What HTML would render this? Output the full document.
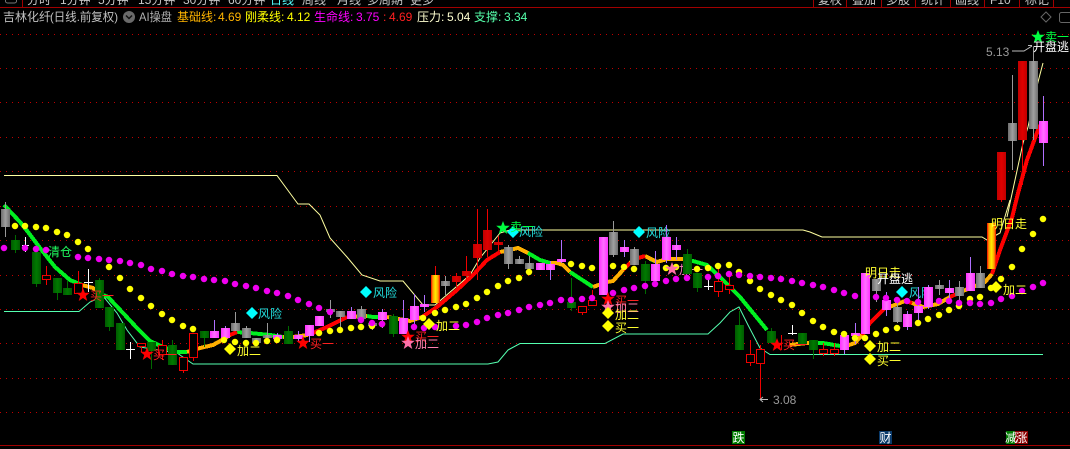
<!DOCTYPE html>
<html><head><meta charset="utf-8"><style>
html,body{margin:0;padding:0;background:#000;width:1070px;height:449px;overflow:hidden}
svg{display:block;position:absolute;left:0;top:0}
text{font-family:"Liberation Sans","WenQuanYi Zen Hei","Noto Sans CJK SC",sans-serif;font-size:12px}
.l{font-family:"WenQuanYi Zen Hei","Noto Sans CJK SC",sans-serif;font-size:12px}
.n{fill:none}
</style></head><body>
<svg width="1070" height="449" viewBox="0 0 1070 449" xmlns="http://www.w3.org/2000/svg">
<defs>
<linearGradient id="gg"><stop offset="0" stop-color="#005a00"/><stop offset=".5" stop-color="#007a00"/><stop offset="1" stop-color="#005a00"/></linearGradient>
<linearGradient id="gy"><stop offset="0" stop-color="#6e6e6e"/><stop offset=".5" stop-color="#a0a0a0"/><stop offset="1" stop-color="#6e6e6e"/></linearGradient>
<linearGradient id="gm"><stop offset="0" stop-color="#ff30ff"/><stop offset=".5" stop-color="#ff70ff"/><stop offset="1" stop-color="#ff30ff"/></linearGradient>
<linearGradient id="gr"><stop offset="0" stop-color="#c00000"/><stop offset=".5" stop-color="#e00000"/><stop offset="1" stop-color="#c00000"/></linearGradient>
<linearGradient id="go"><stop offset="0" stop-color="#f00000"/><stop offset=".2" stop-color="#ff9900"/><stop offset=".5" stop-color="#ffee00"/><stop offset=".8" stop-color="#ff9900"/><stop offset="1" stop-color="#f00000"/></linearGradient>
<polygon id="st" points="0,-7 1.8,-2.2 6.8,-2.2 2.8,1 4.3,6 0,3 -4.3,6 -2.8,1 -6.8,-2.2 -1.8,-2.2"/>
<polygon id="di" points="0,-6 6,0 0,6 -6,0"/>
<clipPath id="tc"><rect x="0" y="0" width="1070" height="7"/></clipPath>
</defs>
<rect width="1070" height="449" fill="#000"/>

<!-- top tabs -->
<g clip-path="url(#tc)" fill="#c8c8c8">
<text x="27" y="4">分时</text><text x="60" y="4">1分钟</text><text x="98" y="4">5分钟</text><text x="138" y="4">15分钟</text><text x="183" y="4">30分钟</text><text x="228" y="4">60分钟</text>
<text x="270" y="4" fill="#55ffff">日线</text><text x="302" y="4">周线</text><text x="337" y="4">月线</text><text x="367" y="4">多周期</text><text x="410" y="4">更多</text>
<text x="818" y="4">复权</text><text x="852" y="4">叠加</text><text x="886" y="4">多股</text><text x="921" y="4">统计</text><text x="955" y="4">画线</text><text x="990" y="4">F10</text><text x="1025" y="4">标记</text>
</g>
<rect x="5.500" y="-6" width="11" height="9" rx="2" fill="none" stroke="#777"/>
<g shape-rendering="crispEdges">
<path d="M0 7.500H1070M0 445.500H1070" stroke="#a00000" fill="none"/>
<path d="M22.500 0V7M813.500 0V7M846.500 0V7M881.500 0V7M915.500 0V7M950.500 0V7M984.500 0V7M1019.500 0V7M1053.500 0V7" stroke="#a00000" fill="none"/>
<path d="M0 34.500H1070M0 68.500H1070M0 102.500H1070M0 137.500H1070M0 171.500H1070M0 206.500H1070M0 240.500H1070M0 275.500H1070M0 309.500H1070M0 343.500H1070M0 378.500H1070M0 412.500H1070" stroke="#c00000" stroke-dasharray="1 5" fill="none"/>
</g>

<!-- header -->
<text x="3" y="21" fill="#c0c0c0">吉林化纤</text>
<text x="50" y="21" fill="#c0c0c0" textLength="68" lengthAdjust="spacingAndGlyphs">(日线.前复权)</text>
<circle cx="129" cy="17" r="6" fill="#6a6a6a"/><path d="M126 15.500l3 3 3-3" stroke="#111" stroke-width="1.500" fill="none"/>
<text x="139" y="21" fill="#b0b0b0" textLength="33" lengthAdjust="spacingAndGlyphs">AI操盘</text>
<g fill="#ffb400"><text x="177" y="21">基础线:</text><text x="218" y="21">4.69</text></g>
<g fill="#ffff00"><text x="245" y="21">刚柔线:</text><text x="287" y="21">4.12</text></g>
<g fill="#ff00ff"><text x="314" y="21">生命线:</text><text x="356" y="21">3.75</text></g>
<g fill="#ff2020"><text x="383" y="21">:</text><text x="389" y="21">4.69</text></g>
<g fill="#ffffd0"><text x="417" y="21">压力:</text><text x="447" y="21">5.04</text></g>
<g fill="#55ffaa"><text x="474" y="21">支撑:</text><text x="504" y="21">3.34</text></g>
<path d="M1046 12l5 5-5 5-5-5z" fill="none" stroke="#666"/>
<rect x="1059.500" y="12.500" width="14" height="10" rx="2" fill="none" stroke="#666"/>

<!-- thin boundaries -->
<g fill="none" stroke-width="1">
<path stroke="#ffffa0" d="M4 175.500H277L295 200L298 204H309L320 215L330 238L347 257L362 275L380 281H403L423 305H435L470 275L480 258L500 233L510 230H803L810 232L822 237H982L987 240L1000 233L1010 200"/>
<path stroke="#ffffa0" d="M1007 217L1023 143L1028 127L1038 82L1043 63"/>
<path stroke="#55ffb0" d="M4 311.500H79L90 302L103 296L117 313L127 330L140 347L177 353L193 364H488L498 362L508 350L520 343.500H605L623 334H708L720 323L730 312L739 307L748 325L760 348L770 354.500H1043"/>
</g>

<!-- risk labels (under candles) -->
<g fill="#00ffff">
<use href="#di" x="252" y="313"/><use href="#di" x="366" y="292"/><use href="#di" x="513" y="232"/><use href="#di" x="639" y="232"/><use href="#di" x="902" y="292"/>
</g>
<g fill="#22e0e0" class="l">
<text class="l" x="258" y="318">风险</text><text class="l" x="373" y="297">风险</text><text class="l" x="519" y="236">风险</text><text class="l" x="646" y="237">风险</text><text class="l" x="909" y="297">风险</text>
</g>
<text class="l" x="48" y="256" fill="#20ff60">清仓</text>
<text class="l" x="679" y="274" fill="#ff80c0">加一</text>

<!-- main MA -->
<g fill="none" stroke-width="4" shape-rendering="crispEdges">
<path stroke="#00f020" d="M4 205L20 222L28 232L40 248L55 267L70 280L82 285M103 295L108 297L123 313L137 328L150 341L163 347L177 352L187 352M237 332L250 333L270 335L283 337M367 316L373 317L387 317M528 253L540 260L550 263M570 272L593 287M650 259L657 262M683 259L693 261L707 265L723 280L740 297L767 330M818 343L823 343L840 346"/>
<path stroke="#ffb000" d="M82 285L93 288L103 295M187 352L200 348L213 345L222 340L230 335L237 332M283 337L293 337L308 335M347 317L367 316M387 317L410 321L422 317M500 252L510 250L518 248L528 253M550 263L557 263L563 265L570 272M593 287L607 282L613 281L623 270M630 263L635 259M645 256L657 262L667 259L683 259M790 345L807 343L818 343M840 346L849 345L855 343L862 335M885 308L892 306L905 301M912 303L923 307L938 304L950 297M963 291L985 282L992 274"/>
<path stroke="#ff0000" d="M230 335L237 332M308 335L313 333L327 327L347 317M422 317L437 307L457 290L473 275L487 260L500 252M623 270L630 263M635 259L645 256M862 335L870 323L885 308M905 301L912 303M950 297L963 291M992 274L1000 250L1012 218L1017 197L1027 160L1038 130L1040 125"/>
</g>

<g shape-rendering="crispEdges">
<!-- wicks -->
<path fill="none" stroke="#006a00" d="M15.500 235V253M36.500 284V287M57.500 293V300M67.500 281V288M99.500 278V280M109.500 327V331M151.500 351V369M172.500 340V345M204.500 338V347M288.500 326V331M393.500 314V337M571.500 278V311M645.500 261V294M687.500 249V254M697.500 288V292M739.500 311V325M771.500 328V331M813.500 350V359"/>
<path fill="none" stroke="#b070ff" d="M214.500 320V331M225.500 326V328M277.500 333V343M298.500 331V342M309.500 325V342M351.500 307V311M382.500 309V328M403.500 300V318M414.500 294V330M424.500 295V312M550.500 261V280M561.500 240V263M624.500 240V257M655.500 251V264M666.500 225V263M676.500 237V260M844.500 350V354M855.500 323V344M886.500 292V316M907.500 311V330M918.500 287V321M928.500 285V309M949.500 280V298M970.500 257V273M1043.500 96V166"/>
<path fill="none" stroke="#999" d="M5.500 202V237M235.500 312V323M246.500 326V328M256.500 343V345M267.500 323V335M330.500 300V318M340.500 311V327M361.500 306V309M372.500 320V330M445.500 276V295M508.500 245V269M519.500 256V264M529.500 256V275M613.500 221V257M634.500 247V249M876.500 291V302M897.500 300V323M939.500 280V295M959.500 281V300M980.500 266V273M1012.500 75V170M1033.500 47V140"/>
<path fill="none" stroke="#f00000" d="M46.500 266V285M78.500 271V283M141.500 346V352M162.500 340V360M183.500 370V373M193.500 357V361M435.500 266V275M456.500 273V287M466.500 256V280M477.500 209V280M487.500 209V257M498.500 236V255M582.500 312V315M592.500 290V300M718.500 269V297M729.500 273V294M750.500 340V366M760.500 345V400M781.500 335V350M823.500 343V356M834.500 343V356M1001.500 200V202M1022.500 140V185"/>
<path fill="none" stroke="#fff" d="M25.500 237V252M88.500 269V292M84 282.500H93M130.500 342V359M126 349.500H135M708.500 279V290M704 286.500H713M792.500 325V335M788 333.500H797M22 245.500H29"/>

<!-- green bodies -->
<g fill="url(#gg)">
<rect x="11" y="240" width="9" height="10"/><rect x="32" y="252" width="9" height="32"/><rect x="53" y="278" width="9" height="15"/><rect x="63" y="288" width="9" height="7"/><rect x="95" y="280" width="9" height="28"/><rect x="105" y="307" width="9" height="20"/><rect x="116" y="323" width="9" height="27"/><rect x="147" y="342" width="9" height="9"/><rect x="168" y="345" width="9" height="20"/><rect x="200" y="331" width="9" height="7"/><rect x="284" y="331" width="9" height="13"/><rect x="389" y="316" width="9" height="18"/><rect x="567" y="302" width="9" height="6"/><rect x="641" y="264" width="9" height="17"/><rect x="683" y="254" width="9" height="20"/><rect x="693" y="273" width="9" height="15"/><rect x="735" y="325" width="9" height="25"/><rect x="767" y="331" width="9" height="12"/><rect x="798" y="333" width="9" height="11"/><rect x="809" y="340" width="9" height="10"/>
</g>
<!-- magenta bodies -->
<g fill="url(#gm)">
<rect x="210" y="331" width="9" height="7"/><rect x="221" y="328" width="9" height="10"/><rect x="273" y="335" width="9" height="4"/><rect x="294" y="335" width="9" height="4"/><rect x="305" y="325" width="9" height="11"/><rect x="315" y="316" width="9" height="10"/><rect x="347" y="311" width="9" height="8"/><rect x="378" y="312" width="9" height="8"/><rect x="399" y="318" width="9" height="16"/><rect x="410" y="306" width="9" height="14"/><rect x="420" y="304" width="9" height="3"/><rect x="536" y="263" width="9" height="7"/><rect x="546" y="264" width="9" height="6"/><rect x="557" y="259" width="9" height="3"/><rect x="599" y="237" width="9" height="58"/><rect x="620" y="247" width="9" height="5"/><rect x="651" y="264" width="9" height="17"/><rect x="662" y="237" width="9" height="23"/><rect x="672" y="245" width="9" height="5"/><rect x="840" y="335" width="9" height="15"/><rect x="851" y="333" width="9" height="3"/><rect x="861" y="273" width="9" height="61"/><rect x="882" y="300" width="9" height="10"/><rect x="903" y="314" width="9" height="13"/><rect x="914" y="306" width="9" height="7"/><rect x="924" y="287" width="9" height="20"/><rect x="945" y="288" width="9" height="5"/><rect x="966" y="273" width="9" height="18"/><rect x="1039" y="121" width="9" height="22"/>
</g>
<!-- gray bodies -->
<g fill="url(#gy)">
<rect x="1" y="209" width="9" height="18"/><rect x="231" y="323" width="9" height="8"/><rect x="242" y="328" width="9" height="10"/><rect x="252" y="338" width="9" height="5"/><rect x="263" y="335" width="9" height="3"/><rect x="326" y="309" width="9" height="3"/><rect x="336" y="311" width="9" height="6"/><rect x="357" y="309" width="9" height="10"/><rect x="368" y="323" width="9" height="3"/><rect x="441" y="281" width="9" height="5"/><rect x="504" y="247" width="9" height="17"/><rect x="515" y="259" width="9" height="5"/><rect x="525" y="263" width="9" height="6"/><rect x="609" y="232" width="9" height="23"/><rect x="630" y="249" width="9" height="16"/><rect x="872" y="279" width="9" height="12"/><rect x="893" y="307" width="9" height="15"/><rect x="935" y="285" width="9" height="4"/><rect x="955" y="287" width="9" height="9"/><rect x="976" y="273" width="9" height="15"/><rect x="1008" y="123" width="9" height="18"/><rect x="1029" y="61" width="9" height="68"/>
</g>
<!-- red filled -->
<g fill="url(#gr)">
<rect x="452" y="276" width="9" height="6"/><rect x="462" y="271" width="9" height="5"/><rect x="473" y="244" width="9" height="14"/><rect x="483" y="230" width="9" height="20"/><rect x="494" y="242" width="9" height="3"/><rect x="997" y="152" width="9" height="48"/><rect x="1018" y="61" width="9" height="79"/>
</g>
<!-- orange -->
<g fill="url(#go)">
<rect x="431" y="275" width="9" height="28"/><rect x="987" y="223" width="9" height="46"/>
</g>
<!-- red hollow -->
<g fill="#000" stroke="#f00000">
<rect x="42.500" y="275.500" width="8" height="4"/><rect x="74.500" y="283.500" width="8" height="10"/><rect x="137.500" y="343.500" width="8" height="3"/><rect x="158.500" y="345.500" width="8" height="9"/><rect x="179.500" y="357.500" width="8" height="13"/><rect x="189.500" y="333.500" width="8" height="24"/><rect x="578.500" y="306.500" width="8" height="6"/><rect x="588.500" y="300.500" width="8" height="5"/><rect x="714.500" y="281.500" width="8" height="10"/><rect x="725.500" y="285.500" width="8" height="4"/><rect x="746.500" y="354.500" width="8" height="8"/><rect x="756.500" y="349.500" width="8" height="14"/><rect x="819.500" y="349.500" width="8" height="4"/><rect x="830.500" y="349.500" width="8" height="4"/>
</g>
</g>

<!-- dots -->
<path fill="none" stroke="#ffff00" stroke-width="6.500" stroke-linecap="round" d="M15 226h0M25 226h0M36 227h0M46 228h0M57 232h0M67 235h0M78 242h0M88 249h0M109 267h0M120 278h0M130 289h0M141 298h0M151 306h0M162 314h0M172 320h0M183 326h0M193 329h0M224 340h0M235 342h0M246 343h0M256 343h0M267 341h0M277 340h0M319 333h0M330 331h0M340 330h0M351 328h0M361 327h0M372 326h0M382 324h0M423 318h0M435 313h0M445 310h0M456 307h0M466 304h0M477 298h0M487 292h0M498 286h0M508 281h0M519 278h0M529 272h0M571 264h0M582 266h0M592 268h0M613 266h0M624 267h0M634 269h0M666 268h0M676 267h0M697 269h0M708 268h0M718 266h0M729 265h0M739 272h0M750 281h0M760 289h0M771 295h0M781 300h0M792 305h0M802 313h0M813 321h0M823 327h0M834 332h0M844 334h0M855 338h0M865 338h0M876 334h0M886 330h0M897 328h0M918 323h0M928 319h0M939 315h0M949 310h0M959 306h0M970 299h0M980 297h0M991 288h0M1001 279h0M1012 267h0M1022 249h0M1033 234h0M1043 219h0"/>
<path fill="none" stroke="#f000f0" stroke-width="6.500" stroke-linecap="round" d="M4 248h0M25 248h0M36 249h0M46 250h0M78 257h0M88 258h0M99 259h0M109 260h0M120 261h0M130 263h0M141 265h0M151 269h0M162 271h0M172 274h0M183 276h0M193 277h0M204 279h0M214 280h0M225 281h0M235 284h0M246 286h0M256 288h0M267 291h0M277 293h0M288 296h0M298 300h0M309 304h0M319 308h0M330 312h0M361 320h0M372 323h0M382 324h0M414 327h0M424 328h0M435 327h0M456 326h0M466 325h0M477 322h0M487 318h0M498 315h0M508 313h0M519 310h0M529 307h0M540 305h0M550 303h0M561 300h0M571 300h0M582 299h0M592 298h0M613 293h0M624 290h0M634 288h0M645 286h0M655 284h0M666 281h0M676 279h0M687 278h0M708 277h0M718 276h0M729 274h0M739 275h0M750 276h0M760 277h0M771 278h0M781 279h0M792 281h0M802 283h0M813 285h0M823 287h0M834 290h0M844 293h0M855 296h0M876 297h0M886 298h0M897 300h0M907 301h0M918 302h0M939 301h0M949 301h0M959 303h0M970 303h0M980 304h0M991 303h0M1001 299h0M1012 296h0M1022 291h0M1033 287h0M1043 283h0"/>

<!-- stars -->
<g fill="#ff0000"><use href="#st" x="83" y="295"/><use href="#st" x="147" y="354"/><use href="#st" x="303" y="343"/><use href="#st" x="408" y="337"/><use href="#st" x="608" y="299"/><use href="#st" x="777" y="345"/></g>
<g fill="#ff70a8"><use href="#st" x="408" y="343"/><use href="#st" x="608" y="307"/><use href="#st" x="672" y="269"/></g>
<g fill="#00ff40"><use href="#st" x="503" y="228"/><use href="#st" x="1038" y="37"/></g>
<g fill="#ffff00"><use href="#di" x="230" y="349"/><use href="#di" x="429" y="324"/><use href="#di" x="608" y="313"/><use href="#di" x="608" y="326"/><use href="#di" x="870" y="346"/><use href="#di" x="870" y="359"/><use href="#di" x="996" y="287"/></g>

<!-- labels -->
<g fill="#ff2020">
<text class="l" x="90" y="300">买一</text><text class="l" x="153" y="359">买一</text><text class="l" x="310" y="348">买一</text><text class="l" x="415" y="341">买一</text><text class="l" x="615" y="305">买一</text><text class="l" x="783" y="349">买一</text>
</g>
<g fill="#ff80b0">
<text class="l" x="415" y="348">加二</text><text class="l" x="615" y="312">加二</text>
</g>
<g fill="#ffff30">
<text class="l" x="237" y="355">加二</text><text class="l" x="436" y="330">加二</text><text class="l" x="615" y="319">加二</text><text class="l" x="615" y="332">买一</text><text class="l" x="877" y="351">加二</text><text class="l" x="877" y="365">买一</text><text class="l" x="1003" y="294">加二</text><text class="l" x="865" y="277">明日走</text><text class="l" x="991" y="228">明日走</text>
</g>
<text class="l" x="510" y="231" fill="#00ff40">卖一</text>
<text class="l" x="1045" y="41" fill="#00ff40">卖一</text>
<text class="l" x="877" y="283" fill="#fff">开盘逃</text>
<text class="l" x="1033" y="51" fill="#fff">开盘逃</text>
<text x="986" y="56" fill="#999">5.13</text>
<path d="M1012 51H1024L1032 46M1028 45.500H1032" stroke="#bbb" fill="none"/>
<text x="773" y="404" fill="#999">3.08</text>
<path d="M768 399.500H760M763 397l-3 2.500 3 2.500" stroke="#bbb" fill="none"/>

<!-- bottom tags -->
<rect x="732" y="431" width="13" height="13" fill="#007a00"/><text class="l" x="732.500" y="442" fill="#fff">跌</text>
<rect x="879" y="431" width="13" height="13" fill="#0a3a6a"/><text class="l" x="879.500" y="442" fill="#fff">财</text>
<rect x="1006" y="431" width="10" height="13" fill="#007a00"/><rect x="1015" y="431" width="13" height="13" fill="#8a0000"/>
<text class="l" x="1005" y="442" fill="#fff">减</text><text class="l" x="1015.500" y="442" fill="#fff">涨</text>
</svg>
</body></html>
